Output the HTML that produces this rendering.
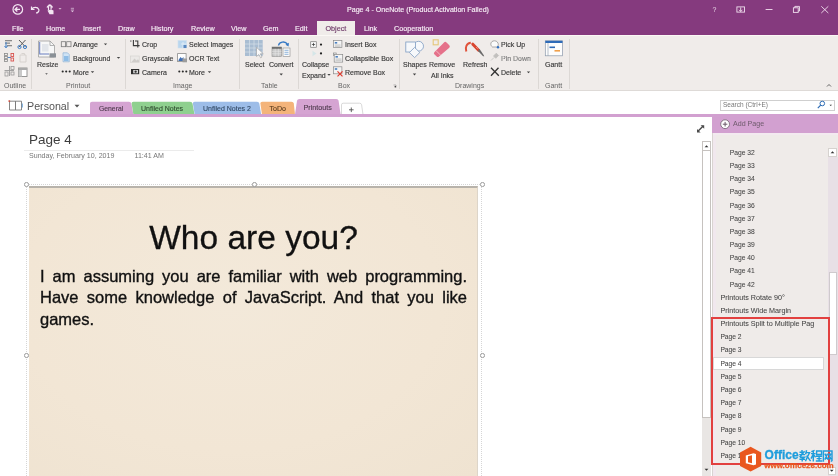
<!DOCTYPE html>
<html><head><meta charset="utf-8">
<style>
*{margin:0;padding:0;box-sizing:border-box}
html,body{width:838px;height:476px;overflow:hidden;background:#fff;-webkit-font-smoothing:antialiased;font-family:"Liberation Sans",sans-serif}
.a{position:absolute;white-space:nowrap}
#title{left:0;top:0;width:838px;height:35px;background:#853a7e}
.tt{color:#f7eef6;font-size:7.2px;line-height:8px;-webkit-text-stroke:0.15px #f7eef6}
.rb{color:#3a3a3a;font-size:7px;line-height:8px;-webkit-text-stroke:0.15px #3a3a3a}
.gl{color:#666;font-size:7px;line-height:8px}
.sep{position:absolute;top:39px;width:1px;height:50px;background:#dcd8d5}
.pg{color:#444;font-size:6.7px;line-height:8px;-webkit-text-stroke:0.05px #444}
.tab{position:absolute;height:13px;border-radius:3px 3px 0 0;font-size:7px;line-height:12px;color:#333;text-align:center}
</style></head><body><div style="position:absolute;left:0;top:0;width:838px;height:476px;will-change:transform">
<!-- title bar -->
<div id="title" class="a"></div>
<div class="a tt" style="left:347px;top:6px;font-size:7.1px">Page 4 - OneNote (Product Activation Failed)</div>
<!-- tab labels -->
<div class="a tt" style="left:12px;top:25px">File</div>
<div class="a tt" style="left:46px;top:25px">Home</div>
<div class="a tt" style="left:83px;top:25px">Insert</div>
<div class="a tt" style="left:118px;top:25px">Draw</div>
<div class="a tt" style="left:151px;top:25px">History</div>
<div class="a tt" style="left:191px;top:25px">Review</div>
<div class="a tt" style="left:231px;top:25px">View</div>
<div class="a tt" style="left:263px;top:25px">Gem</div>
<div class="a tt" style="left:295px;top:25px">Edit</div>
<div class="a" style="left:317px;top:21px;width:38px;height:15px;background:#f0ecea"></div>
<div class="a tt" style="left:325.5px;top:25px;color:#6e3a69;-webkit-text-stroke:0.15px #6e3a69">Object</div>
<div class="a tt" style="left:364px;top:25px">Link</div>
<div class="a tt" style="left:394px;top:25px">Cooperation</div>
<!-- ribbon -->
<div class="a" style="left:0;top:35px;width:838px;height:56px;background:#f0ecea;border-bottom:1px solid #dedad7;border-top:1.5px solid #fbf8f5"></div>


<!-- ribbon separators -->
<div class="sep" style="left:31px"></div>
<div class="sep" style="left:125px"></div>
<div class="sep" style="left:239px"></div>
<div class="sep" style="left:298px"></div>
<div class="sep" style="left:399px"></div>
<div class="sep" style="left:538px"></div>
<div class="sep" style="left:569px"></div>
<!-- group labels -->
<div class="a gl" style="left:4px;top:82px">Outline</div>
<div class="a gl" style="left:66px;top:82px">Printout</div>
<div class="a gl" style="left:173px;top:82px">Image</div>
<div class="a gl" style="left:261px;top:82px">Table</div>
<div class="a gl" style="left:338px;top:82px">Box</div>
<div class="a gl" style="left:455px;top:82px">Drawings</div>
<div class="a gl" style="left:545px;top:82px">Gantt</div>
<!-- small buttons text -->
<div class="a rb" style="left:73px;top:41px">Arrange</div>
<div class="a rb" style="left:73px;top:55px">Background</div>
<div class="a rb" style="left:73px;top:69px">More</div>
<div class="a rb" style="left:142px;top:41px">Crop</div>
<div class="a rb" style="left:142px;top:55px">Grayscale</div>
<div class="a rb" style="left:142px;top:69px">Camera</div>
<div class="a rb" style="left:189px;top:41px">Select Images</div>
<div class="a rb" style="left:189px;top:55px">OCR Text</div>
<div class="a rb" style="left:189px;top:69px">More</div>
<div class="a rb" style="left:345px;top:41px">Insert Box</div>
<div class="a rb" style="left:345px;top:55px">Collapsible Box</div>
<div class="a rb" style="left:345px;top:69px">Remove Box</div>
<div class="a rb" style="left:501px;top:41px">Pick Up</div>
<div class="a rb" style="left:501px;top:55px;color:#aaa">Pin Down</div>
<div class="a rb" style="left:501px;top:69px">Delete</div>
<!-- large button labels -->
<div class="a rb" style="left:37px;top:61px">Resize</div>
<div class="a rb" style="left:245px;top:61px">Select</div>
<div class="a rb" style="left:269px;top:61px">Convert</div>
<div class="a rb" style="left:302px;top:61px">Collapse</div>
<div class="a rb" style="left:302px;top:71.5px">Expand</div>
<div class="a rb" style="left:403px;top:61px">Shapes</div>
<div class="a rb" style="left:429px;top:61px">Remove</div>
<div class="a rb" style="left:431px;top:71.5px">All Inks</div>
<div class="a rb" style="left:463px;top:61px">Refresh</div>
<div class="a rb" style="left:545px;top:61px">Gantt</div>


<svg class="a" style="left:0;top:0" width="838" height="92" viewBox="0 0 838 92">
<!-- title icons -->
<g fill="none" stroke="#f3e6f2" stroke-width="1.2">
<circle cx="17.8" cy="9.4" r="4.8"/>
<path d="M20 9.4H15.2M17.3 7.2L15.1 9.4L17.3 11.6" stroke-width="1.4"/>
<path d="M31.5 6.5L31.5 9.5L34.5 9.5M31.8 9.3C33 7 37.5 6.5 38.8 9.5C39.5 11.5 37.5 13 36 13"/>
<path d="M48.5 10V6.2a1.3 1.3 0 0 1 2.6 0V9.5M47 7.5a3 3 0 0 1 5.6 0"/>
</g>
<path d="M47.5 10.5L49.5 14.3H53.5L53.5 10.5L51 9.5Z" fill="#f3e6f2"/>
<path d="M58.5 8.3H61.6L60 9.6Z" fill="#e9d5e7"/>
<path d="M70.8 8.3H74M70.8 10H74" stroke="#e0c8de" stroke-width="0.7"/>
<path d="M71 10.8H73.8L72.4 12.2Z" fill="#e0c8de"/>
<!-- window controls -->
<text x="712.5" y="12.3" font-size="7" fill="#e9d5e7" font-family="Liberation Sans">?</text>
<rect x="736.9" y="6.9" width="7.6" height="5.2" fill="none" stroke="#f0e0ee" stroke-width="0.9"/>
<path d="M740.7 7.5V11.5M739 9.8L740.7 11.5L742.4 9.8" stroke="#f0e0ee" stroke-width="0.9" fill="none"/>
<path d="M765.6 9.5H772.5" stroke="#f0e0ee" stroke-width="0.9"/>
<rect x="793.4" y="7.8" width="4.8" height="4.6" fill="none" stroke="#f0e0ee" stroke-width="0.9"/>
<path d="M794.8 7.8V6.4H799.5V11H798.2" fill="none" stroke="#f0e0ee" stroke-width="0.9"/>
<path d="M821.3 6.3L828.3 13M828.3 6.3L821.3 13" stroke="#f0e0ee" stroke-width="0.9"/>

<!-- Outline group -->
<g>
<rect x="5" y="40" width="7" height="1.3" fill="#8a8a8a"/><rect x="5" y="42.5" width="5" height="1.3" fill="#8a8a8a"/><rect x="7" y="45" width="5" height="1.3" fill="#8a8a8a"/>
<path d="M6 42V47.5M4.5 46L6 47.8L7.5 46" stroke="#3f7ec6" stroke-width="1" fill="none"/>
<path d="M19 40L25.5 47M25.5 40L19 47" stroke="#5a5a5a" stroke-width="1"/>
<circle cx="19.5" cy="47" r="1.6" fill="none" stroke="#3f7ec6" stroke-width="1"/><circle cx="25" cy="47" r="1.6" fill="none" stroke="#3f7ec6" stroke-width="1"/>
<rect x="4.5" y="53.5" width="3" height="2" fill="none" stroke="#8a8a8a" stroke-width="0.8"/><rect x="4.5" y="56.5" width="3" height="2" fill="none" stroke="#8a8a8a" stroke-width="0.8"/><rect x="4.5" y="59.5" width="3" height="2" fill="none" stroke="#8a8a8a" stroke-width="0.8"/>
<path d="M8 57.5H11" stroke="#3f7ec6" stroke-width="0.9"/>
<rect x="11" y="53.5" width="2.6" height="3" fill="none" stroke="#d9534f" stroke-width="0.9"/><rect x="11" y="58" width="2.6" height="3" fill="none" stroke="#d9534f" stroke-width="0.9"/>
<path d="M20 55H26V62H20Z M21.5 53.5H24.5V55" fill="none" stroke="#d4d0cc" stroke-width="0.9"/>
<path d="M4.5 70.5H14M9.5 66V76" stroke="#9a9a9a" stroke-width="0.9"/>
<rect x="5" y="72" width="3" height="4" fill="none" stroke="#9a9a9a" stroke-width="0.8"/><rect x="11" y="66.5" width="3" height="3" fill="none" stroke="#9a9a9a" stroke-width="0.8"/><rect x="11" y="72" width="3" height="3" fill="none" stroke="#9a9a9a" stroke-width="0.8"/>
<rect x="18.5" y="68" width="8.5" height="8.5" fill="#ffffff" stroke="#8a8a8a" stroke-width="0.9"/>
<path d="M18.5 68H27V70H18.5Z" fill="#aaaaaa"/><path d="M18.5 70V76.5H22V70Z" fill="#c9c9c9"/>
</g>
<!-- Resize -->
<path d="M38.5 41H50L54.5 45.5V57H38.5Z" fill="#f7f7f7" stroke="#a0a0a0" stroke-width="0.8"/>
<path d="M50 41V45.5H54.5" fill="none" stroke="#a0a0a0" stroke-width="0.8"/>
<rect x="39.2" y="42" width="1" height="12.5" fill="#6a7fc0"/>
<rect x="40" y="53.5" width="9" height="1" fill="#6a7fc0"/>
<rect x="42" y="44" width="6.5" height="7.5" fill="#e2e5ea"/>
<rect x="49.5" y="53.3" width="6.5" height="4.2" fill="#8a9096"/>
<path d="M45.2 73.3H47.8L46.5 74.7Z" fill="#555"/>
<!-- Arrange / Background / More -->
<rect x="61.3" y="41.7" width="4.3" height="5" fill="none" stroke="#7a7a7a" stroke-width="0.8"/>
<rect x="66.7" y="41.7" width="4.3" height="5" fill="none" stroke="#7a7a7a" stroke-width="0.8"/>
<path d="M103.8 43.4H107.2L105.5 45.2Z" fill="#444"/>
<path d="M63 52.8H67.5L69.3 54.6V61.8H63Z" fill="#cfe3f5" stroke="#8fb3d6" stroke-width="0.7"/>
<path d="M64 56H68.5V61H64Z" fill="#8fbde6"/>
<path d="M116.8 56.9H120.2L118.5 58.7Z" fill="#444"/>
<circle cx="62.7" cy="71.5" r="1.05" fill="#2a2a2a"/><circle cx="66.2" cy="71.5" r="1.05" fill="#2a2a2a"/><circle cx="69.7" cy="71.5" r="1.05" fill="#2a2a2a"/>
<path d="M90.8 71.3H94.2L92.5 73.1Z" fill="#444"/>
<!-- Crop / Grayscale / Camera -->
<path d="M133.4 40V45.6H139.6M135 41H137.8V47.6" fill="none" stroke="#3a3a3a" stroke-width="1.1"/>
<rect x="130.3" y="40.5" width="1.1" height="1.1" fill="#3a3a3a"/>
<rect x="130.5" y="56" width="8.7" height="6.5" fill="#ebe9e7" stroke="#d2cfcc" stroke-width="0.6"/>
<path d="M131.5 62L134.5 58.5L136.5 60.5L138 59.3L139 60.5V62Z" fill="#cfccc9"/>
<rect x="131" y="69" width="8.2" height="5.2" fill="#2e2e2e"/>
<rect x="133.2" y="70" width="4.8" height="3.3" fill="#d8d8d8"/>
<circle cx="135.6" cy="71.65" r="1.15" fill="#2e2e2e"/>
<!-- Select Images / OCR / More -->
<rect x="178" y="40.5" width="8.5" height="7.5" fill="#b9d6ee" stroke="#cfdfee" stroke-width="0.6"/>
<path d="M181 44H186M183 42V48" stroke="#e6f0f8" stroke-width="0.8"/>
<rect x="183.5" y="45" width="3" height="3" fill="#5a88c0"/>
<rect x="177.6" y="53.6" width="8.5" height="8" fill="#fdfdfd" stroke="#8a8a8a" stroke-width="0.8"/>
<path d="M178.5 60L180.5 57L182 58.5L183.5 57V61H178.5Z" fill="#3f6fb5"/>
<rect x="182.5" y="58.5" width="4.5" height="3.8" fill="#9c9c9c"/>
<circle cx="179.3" cy="71.5" r="1.05" fill="#2a2a2a"/><circle cx="182.8" cy="71.5" r="1.05" fill="#2a2a2a"/><circle cx="186.3" cy="71.5" r="1.05" fill="#2a2a2a"/>
<path d="M207.8 71.3H211.2L209.5 73.1Z" fill="#444"/>
<!-- Table: Select -->
<rect x="245" y="40" width="17.7" height="16" fill="#a9bdd2"/>
<g stroke="#d6e0ea" stroke-width="0.7">
<path d="M245 44H262.7M245 48H262.7M245 52H262.7M249.5 40V56M254 40V56M258.5 40V56"/>
</g>
<path d="M256.5 47.3V56.5L258.8 54.5L260.6 57.8L262 57L260.3 53.8H263.3Z" fill="#fafafa" stroke="#9a9a9a" stroke-width="0.6"/>
<!-- Table: Convert -->
<path d="M278.5 45.5C279 42 285 40.5 287.5 44.3" fill="none" stroke="#3578c4" stroke-width="1.4"/>
<path d="M285.5 44.8L288.6 46.5L288.9 42.8Z" fill="#3578c4"/>
<rect x="272" y="47" width="9.6" height="9.3" fill="#c6c6c6" stroke="#8a8a8a" stroke-width="0.6"/>
<rect x="272" y="47" width="9.6" height="1.8" fill="#6e6e6e"/>
<path d="M272 51.3H281.6M272 53.8H281.6M275.2 48.8V56.3M278.4 48.8V56.3" stroke="#e8e8e8" stroke-width="0.6"/>
<rect x="283" y="48" width="7" height="8.3" fill="#fafafa" stroke="#8a8a8a" stroke-width="0.6"/>
<path d="M284.5 50.3H288.5M284.5 52.3H288.5M284.5 54.3H288.5" stroke="#4a86c8" stroke-width="0.6"/>
<path d="M279.5 73.6H282.9L281.2 75.4Z" fill="#444"/>
<!-- Collapse -->
<rect x="310.7" y="41.7" width="5.6" height="5.6" fill="#f8f8f8" stroke="#7a7a7a" stroke-width="0.7"/>
<path d="M311.9 44.5H315.1M313.5 42.9V46.1" stroke="#333" stroke-width="0.7"/>
<circle cx="321" cy="44.6" r="1.1" fill="#222"/>
<path d="M312.5 50.8L316.5 53.5L312.5 56.3Z" fill="#d5e6e8"/>
<circle cx="321" cy="53.4" r="1.1" fill="#222"/>
<path d="M327.3 74.0H330.7L329.0 75.8Z" fill="#444"/>
<!-- Box icons -->
<rect x="333.4" y="40.6" width="8.5" height="7" fill="#f4f4f4" stroke="#8a8a8a" stroke-width="0.7"/>
<rect x="334.8" y="42" width="2.4" height="1.6" fill="#4a7fbf"/><path d="M334.8 45H340.5M334.8 46.3H340.5" stroke="#9a9a9a" stroke-width="0.5"/>
<rect x="333.4" y="53" width="2.8" height="2.6" fill="#f4f4f4" stroke="#8a8a8a" stroke-width="0.7"/>
<rect x="334.2" y="54.5" width="8.5" height="7.6" fill="#f4f4f4" stroke="#8a8a8a" stroke-width="0.7"/>
<rect x="335.5" y="56" width="2.4" height="1.6" fill="#4a7fbf"/><path d="M335.5 59H341.5M335.5 60.3H341.5" stroke="#9a9a9a" stroke-width="0.5"/>
<rect x="333.4" y="66.8" width="8.5" height="7" fill="#f4f4f4" stroke="#8a8a8a" stroke-width="0.7"/>
<rect x="334.8" y="68.2" width="2.4" height="1.6" fill="#4a7fbf"/>
<path d="M337.5 71.3L342.5 76.3M342.5 71.3L337.5 76.3" stroke="#e03a2e" stroke-width="1.2"/>
<path d="M393.5 85H396V87.5" fill="none" stroke="#888" stroke-width="0.6"/><rect x="394.6" y="86" width="1.4" height="1.4" fill="#444"/>
<!-- Shapes -->
<circle cx="418.6" cy="46.2" r="4.9" fill="#f6f8fb" stroke="#7d9cc2" stroke-width="0.8"/>
<rect x="405.8" y="42" width="9.8" height="10" fill="#f6f8fb" stroke="#7d9cc2" stroke-width="0.8"/>
<path d="M414.6 47.4L419.8 52.5L414.6 57.6L409.4 52.5Z" fill="#f6f8fb" stroke="#7d9cc2" stroke-width="0.8"/>
<path d="M412.8 73.6H416.2L414.5 75.4Z" fill="#444"/>
<!-- Remove All Inks -->
<rect x="433.2" y="39.8" width="5" height="5" fill="none" stroke="#e5c77a" stroke-width="1.1"/>
<path d="M444 42.4Q445.3 41.3 446.5 42.5L449.3 45.3Q450.4 46.5 449.3 47.7L439 56.6Q437.8 57.6 436.7 56.6L434.3 54.2Q433.3 53 434.5 51.9Z" fill="#e5718a"/>
<path d="M436 50.6L440.8 55.4" stroke="#f6d5dc" stroke-width="0.7"/>
<!-- Refresh -->
<path d="M470.8 42.8C466.8 43 464.8 47.2 466.3 51.5" fill="none" stroke="#e0523a" stroke-width="2"/>
<path d="M472.8 44.2L478.6 50.2" stroke="#d9452f" stroke-width="3" stroke-linecap="round"/>
<path d="M477.8 50.8L479.6 49L483.8 55.2L484.2 56.6L482.8 55.9Z" fill="#6a6a6a"/>
<path d="M476.2 47.2L477.6 48.6" stroke="#f3d3cc" stroke-width="0.6"/>
<!-- Pick up / Pin down / Delete -->
<path d="M494.5 40.8C497 40.8 498.3 42.8 498.3 44.8L497.5 47H492.5C491.3 46.2 490.8 45 490.8 44C490.8 42.3 492.3 40.8 494.5 40.8Z" fill="#fbfbfb" stroke="#8a8a8a" stroke-width="0.7"/>
<circle cx="498" cy="47.3" r="1.2" fill="#2f6fc0"/>
<path d="M493.5 56L496.3 53.2L498.6 55.5L495.8 58.3Z M494 57.5L491 60.5" fill="#c2c0be" stroke="#c2c0be" stroke-width="0.8"/>
<path d="M491 67.8L498.8 75.8M498.5 67.8L491 75.8" stroke="#333" stroke-width="1.3"/>
<path d="M526.8 71.4H530.2L528.5 73.2Z" fill="#444"/>
<!-- Gantt -->
<rect x="545.3" y="40.8" width="17.2" height="15" fill="#fdfdfd" stroke="#8a98aa" stroke-width="0.7"/>
<rect x="545.3" y="40.8" width="17.2" height="2.2" fill="#2e6bb8"/>
<path d="M548 43V55.8" stroke="#8a98aa" stroke-width="0.6"/>
<rect x="549.5" y="46.5" width="5.5" height="1.6" fill="#2e6bb8"/>
<rect x="554.5" y="50" width="5.5" height="1.6" fill="#f0a04b"/>
<!-- collapse ribbon caret -->
<path d="M827 86.5L829 84.5L831 86.5" fill="none" stroke="#555" stroke-width="0.9"/>
</svg>

<!-- notebook bar -->
<!-- notebook icon + Personal -->
<svg class="a" style="left:0;top:92px" width="100" height="22" viewBox="0 92 100 22">
<path d="M9.5 101.2H15.5V110H9.5Z M15.5 101.2H21.5V110H15.5Z" fill="#fff" stroke="#7a7a7a" stroke-width="0.9"/>
<rect x="8.5" y="100.3" width="1.6" height="1.6" fill="#d04a3a"/>
<path d="M22.3 103.5V107.5" stroke="#5a9ad6" stroke-width="0.9"/>
<path d="M74.5 104.8H79.5L77 107.5Z" fill="#555"/>
</svg>
<div class="a" style="left:27px;top:99.5px;font-size:10.7px;line-height:13px;color:#555">Personal</div>
<!-- section tabs -->
<svg class="a" style="left:80px;top:96px" width="300" height="22" viewBox="80 96 300 22">
<path d="M90 114.5V103.5Q90 101.7 92 101.7H129Q131 101.7 131.3 103.5L133.4 114.5Z" fill="#d5a4d2"/>
<path d="M133.4 114.5L131.6 103.5Q131.4 101.7 133.4 101.7H190Q192.2 101.7 192.5 103.5L194.5 114.5Z" fill="#8fd08f"/>
<path d="M194.7 114.5L192.9 103.5Q192.7 101.7 194.7 101.7H257Q259 101.7 259.3 103.5L261.2 114.5Z" fill="#9dbde8"/>
<path d="M262 114.5L260.4 103.5Q260.2 101.7 262.2 101.7H291.5Q293.5 101.7 293.8 103.5L295 114.5Z" fill="#f4b47a"/>
<path d="M295 114.5L297 100.8Q297.3 98.9 299.3 98.9H336.3Q338.3 98.9 338.6 100.8L340.6 114.5Z" fill="#d5a4d2"/>
<path d="M341.5 114.5V104.8Q341.5 103.2 343.2 103.2H359.5Q361.3 103.2 361.6 104.8L363 114.5" fill="#ffffff" stroke="#c9c9c9" stroke-width="0.7"/>
<path d="M349 109.8H353.6M351.3 107.5V112.1" stroke="#555" stroke-width="0.9"/>
</svg>
<div class="a" style="left:99px;top:104.5px;font-size:6.8px;line-height:8px;color:#4d3a4c;-webkit-text-stroke:0.12px #4d3a4c">General</div>
<div class="a" style="left:141px;top:104.5px;font-size:7px;line-height:8px;color:#2f4b2f;-webkit-text-stroke:0.12px #2f4b2f">Unfiled Notes</div>
<div class="a" style="left:203px;top:104.5px;font-size:7px;line-height:8px;color:#334a66;-webkit-text-stroke:0.12px #334a66">Unfiled Notes 2</div>
<div class="a" style="left:269.5px;top:104.5px;font-size:7.1px;line-height:8px;color:#5a3d1e;-webkit-text-stroke:0.12px #5a3d1e">ToDo</div>
<div class="a" style="left:303.5px;top:103.5px;font-size:7.2px;line-height:8px;color:#4d3a4c;-webkit-text-stroke:0.12px #4d3a4c">Printouts</div>
<!-- search -->
<div class="a" style="left:720px;top:99.5px;width:115px;height:11px;background:#fff;border:1px solid #cfcfcf"></div>
<div class="a" style="left:723px;top:101px;font-size:6.5px;line-height:8px;color:#777">Search (Ctrl+E)</div>
<svg class="a" style="left:810px;top:98px" width="28" height="14" viewBox="810 98 28 14">
<circle cx="822.3" cy="103.5" r="2.3" fill="none" stroke="#2e6db5" stroke-width="1"/>
<path d="M820.7 105.2L817.8 108.2" stroke="#2e6db5" stroke-width="1.2"/>
<path d="M829.5 104.8H832L830.75 106.1Z" fill="#333"/>
</svg>
<!-- purple line -->
<div class="a" style="left:0;top:114px;width:838px;height:3px;background:#d2a0d0"></div>
<div class="a" style="left:712px;top:114px;width:126px;height:19px;background:#d2a0d0"></div>
<svg class="a" style="left:712px;top:114px" width="60" height="19" viewBox="712 114 60 19">
<circle cx="725.1" cy="124.2" r="4.4" fill="#fff" stroke="#7b6a79" stroke-width="0.9"/>
<path d="M722.8 124.2H727.4M725.1 121.9V126.5" stroke="#6a5868" stroke-width="1"/>
</svg>
<div class="a" style="left:733px;top:120px;font-size:7.1px;line-height:8px;color:#6e5a6c">Add Page</div>
<!-- page list pane -->
<div class="a" style="left:712px;top:133px;width:126px;height:343px;background:#efebe9;border-left:1px solid #d9d4d1"></div>
<div class="a" style="left:713px;top:133px;width:3px;height:343px;background:#f1e8ee"></div>
<div class="a" style="left:713px;top:133px;width:125px;height:2px;background:#f3eaf0"></div>
<!-- page list scroll -->
<div class="a" style="left:828px;top:157px;width:10px;height:319px;background:#e8e0e6"></div>
<div class="a" style="left:829px;top:272px;width:8px;height:83px;background:#fff;border:1px solid #cfcacd"></div>
<div class="a" style="left:828px;top:148px;width:9px;height:9px;background:#fff;border:1px solid #d6d2cf"></div>
<svg class="a" style="left:826px;top:146px" width="12" height="12" viewBox="826 146 12 12"><path d="M830.6 153.2H834.4L832.5 151.2Z" fill="#333"/></svg>
<div class="a" style="left:828px;top:467px;width:8px;height:8px;background:#fff;border:1px solid #d6d2cf"></div>
<svg class="a" style="left:826px;top:464px" width="12" height="12" viewBox="826 464 12 12"><path d="M829.8 469.8H833.6L831.7 471.8Z" fill="#333"/></svg>
<!-- canvas scrollbar -->
<div class="a" style="left:702px;top:141px;width:9px;height:335px;background:#e9e6e4"></div>
<div class="a" style="left:702px;top:141px;width:9px;height:277px;background:#fff;border-left:1px solid #c6c2bf;border-right:1px solid #c6c2bf;border-bottom:1px solid #c6c2bf"></div>
<div class="a" style="left:702px;top:141px;width:9px;height:10px;border:1px solid #c6c2bf;background:#fff"></div>
<svg class="a" style="left:700px;top:140px" width="14" height="14" viewBox="700 140 14 14"><path d="M704.6 147.3H708.4L706.5 145.3Z" fill="#333"/></svg>
<svg class="a" style="left:700px;top:462px" width="14" height="14" viewBox="700 462 14 14"><path d="M704.6 468.8H708.4L706.5 470.8Z" fill="#333"/></svg>
<!-- expand icon -->
<svg class="a" style="left:694px;top:122px" width="14" height="14" viewBox="694 122 14 14">
<path d="M698.2 131L703.2 126" stroke="#4a4a4a" stroke-width="1.4"/>
<path d="M700.6 125.2H704.2V128.8Z M697 129V132.4H700.6Z" fill="#4a4a4a"/>
</svg>
<!-- page title -->
<div class="a" style="left:29px;top:132px;font-size:13.5px;line-height:15px;color:#3d3d3d">Page 4</div>
<div class="a" style="left:24px;top:150px;width:170px;height:1px;background:#ebebeb"></div>
<div class="a" style="left:29px;top:152px;font-size:7.1px;line-height:8px;color:#777">Sunday, February 10, 2019</div>
<div class="a" style="left:134.5px;top:152px;font-size:7.1px;line-height:8px;color:#777">11:41 AM</div>
<!-- image -->
<div class="a" style="left:26px;top:183.5px;width:456px;height:300px;border:1px dotted #d6d6d6"></div>
<div class="a" style="left:29px;top:186px;width:449px;height:290px;background:radial-gradient(ellipse at 45% 40%,#f3e9da 0%,#f2e6d5 60%,#efe3d1 100%);border-top:2px solid #b8b3ab;border-right:1px solid #ddd5c9"></div>
<div class="a" style="left:24px;top:182px;width:4.5px;height:4.5px;background:#fff;border:1px solid #9a9a9a;border-radius:50%"></div>
<div class="a" style="left:252px;top:182px;width:4.5px;height:4.5px;background:#fff;border:1px solid #9a9a9a;border-radius:50%"></div>
<div class="a" style="left:480px;top:182px;width:4.5px;height:4.5px;background:#fff;border:1px solid #9a9a9a;border-radius:50%"></div>
<div class="a" style="left:24px;top:353px;width:4.5px;height:4.5px;background:#fff;border:1px solid #9a9a9a;border-radius:50%"></div>
<div class="a" style="left:480px;top:353px;width:4.5px;height:4.5px;background:#fff;border:1px solid #9a9a9a;border-radius:50%"></div>
<!-- image text -->
<div class="a" style="left:29px;top:218px;width:449px;text-align:center;font-size:33.5px;line-height:40px;color:#111;-webkit-text-stroke:0.3px #111">Who are you?</div>
<div class="a" style="left:40px;top:265.5px;width:427px;font-size:16.5px;line-height:21.7px;color:#111;white-space:normal;-webkit-text-stroke:0.35px #111">
<div style="text-align:justify;text-align-last:justify">I am assuming you are familiar with web programming.</div>
<div style="text-align:justify;text-align-last:justify">Have some knowledge of JavaScript. And that you like</div>
<div>games.</div>
</div>
<!-- page list -->
<div class="a" style="left:712.5px;top:357px;width:111px;height:13px;background:#fff;border:1px solid #d8d8d8"></div>
<div class="a pg" style="left:729.8px;top:148.9px">Page 32</div>
<div class="a pg" style="left:729.8px;top:162.1px">Page 33</div>
<div class="a pg" style="left:729.8px;top:175.2px">Page 34</div>
<div class="a pg" style="left:729.8px;top:188.4px">Page 35</div>
<div class="a pg" style="left:729.8px;top:201.6px">Page 36</div>
<div class="a pg" style="left:729.8px;top:214.7px">Page 37</div>
<div class="a pg" style="left:729.8px;top:227.9px">Page 38</div>
<div class="a pg" style="left:729.8px;top:241.1px">Page 39</div>
<div class="a pg" style="left:729.8px;top:254.3px">Page 40</div>
<div class="a pg" style="left:729.8px;top:267.4px">Page 41</div>
<div class="a pg" style="left:729.8px;top:280.6px">Page 42</div>
<div class="a pg" style="left:720.4px;top:293.8px;font-size:7.2px">Printouts Rotate 90°</div>
<div class="a pg" style="left:720.4px;top:306.9px;font-size:7.2px">Printouts Wide Margin</div>
<div class="a pg" style="left:720.4px;top:320.1px;font-size:7.2px">Printouts Split to Multiple Pag</div>
<div class="a pg" style="left:720.4px;top:333.3px">Page 2</div>
<div class="a pg" style="left:720.4px;top:346.4px">Page 3</div>
<div class="a pg" style="left:720.4px;top:359.6px">Page 4</div>
<div class="a pg" style="left:720.4px;top:372.8px">Page 5</div>
<div class="a pg" style="left:720.4px;top:386.0px">Page 6</div>
<div class="a pg" style="left:720.4px;top:399.1px">Page 7</div>
<div class="a pg" style="left:720.4px;top:412.3px">Page 8</div>
<div class="a pg" style="left:720.4px;top:425.5px">Page 9</div>
<div class="a pg" style="left:720.4px;top:438.6px">Page 10</div>
<div class="a pg" style="left:720.4px;top:451.8px">Page 11</div>
<div class="a" style="left:711px;top:317px;width:118.5px;height:147.5px;border:2px solid #e2403f"></div>
<!-- watermark -->
<svg class="a" style="left:736px;top:444px" width="102" height="32" viewBox="736 444 102 32">
<path d="M750.6 446.8L761.2 452.6V466L750.6 471.6L740 466V452.6Z" fill="#e9571f"/>
<path d="M745.8 455.5L753.5 453.2L756 454V464.5L753.5 465.3L745.8 463.2Z" fill="#fff"/>
<path d="M748 456.3L752 455.3V463.3L748 462.3Z" fill="#e9571f"/>
<g fill="none" stroke="#1f9ddc" stroke-width="1.45">
<path d="M799.5 452.2H804.6M802 450V455M799.2 454.6H805.2M804.6 451.2L799.6 457.2M800.2 457.3H804.3L802.2 458.6V461.5M799.4 459.3H805"/>
<path d="M806.6 450.2L805.6 454.2M806.2 452.6H810.4M809.5 452.6L805.4 461.2M806.6 455.6L810.6 461.2"/>
<path d="M814.6 450.4L811.3 451.6M811 453.6H815.6M813.3 451.2V461.5M813.2 454.2L811 458.6M813.5 454.6L815.6 457.2"/>
<path d="M816.6 450.9H821.6V454.5H816.6Z M816 456.3H822.2M816.6 458.6H821.6M815.8 461H822.4M819.1 456.3V461"/>
<path d="M823.4 461.7V451H832V460.6L830.8 461.5M824.9 453.6L827.9 459.6M827.6 453.6L824.9 459.6M828.6 453.6L831 459.6M830.8 453.6L828.6 459.6"/>
</g>
</svg>
<div class="a" style="left:764.6px;top:448px;font-size:12px;line-height:14px;font-weight:bold;color:#1f9ddc;-webkit-text-stroke:0.3px #1f9ddc">Office</div>
<div class="a" style="left:764.2px;top:460.5px;font-size:8px;line-height:9px;font-weight:bold;color:#e9571f;-webkit-text-stroke:0.25px #e9571f">www.office26.com</div>
</div></body></html>
